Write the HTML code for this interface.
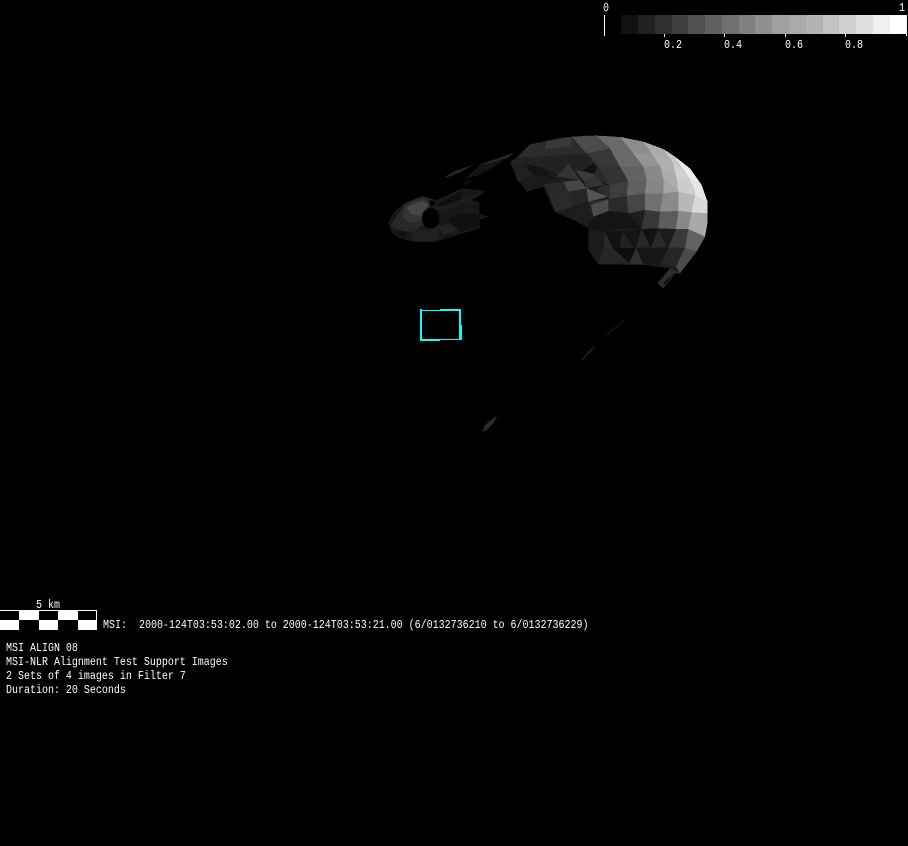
<!DOCTYPE html>
<html>
<head>
<meta charset="utf-8">
<style>
html,body{margin:0;padding:0;background:#000;width:908px;height:846px;overflow:hidden}
svg{display:block;position:absolute;left:0;top:0}
text{font-family:"Liberation Mono",monospace;font-size:10px;fill:#fff;white-space:pre}
</style>
</head>
<body>
<svg width="908" height="846" viewBox="0 0 908 846" xmlns="http://www.w3.org/2000/svg">
<rect width="908" height="846" fill="#000"/>
<g transform="translate(380,125) scale(0.33333)" shape-rendering="crispEdges">
<!-- base silhouette -->
<polygon fill="#1c1c1c" points="450,58 540,38 640,30 720,36 800,52 870,85 930,130 965,180 983,230 983,290 975,340 950,380 900,445 870,430 790,420 655,418 625,375 625,310 580,285 525,262 490,185 440,200 415,165 390,110 410,98"/>
<!-- left upper -->
<polygon fill="#2c2c2c" points="450,58 575,35 620,85 590,88 470,95 410,98"/>
<polygon fill="#3a3a3a" points="500,48 575,36 570,62 495,72"/>
<polygon fill="#222" points="410,98 470,95 620,85 655,125 640,150 585,135 540,150 490,128 390,110"/>
<polygon fill="#202020" points="390,110 435,118 460,150 415,172"/>
<polygon fill="#131313" points="435,118 490,128 510,150 460,150"/>
<polygon fill="#1a1a1a" points="460,150 540,150 490,178 438,196 470,165"/>
<polygon fill="#282828" points="490,178 550,170 565,200 505,205"/>
<polygon fill="#111" points="610,135 640,115 660,140 635,145"/>
<!-- band mesh row 0 -->
<polygon fill="#4c4c4c" points="575,35 650,32 690,70 620,85"/>
<polygon fill="#6a6a6a" points="650,32 720,36 760,85 690,70"/>
<polygon fill="#8c8c8c" points="720,36 790,50 815,85 760,85"/>
<polygon fill="#ababab" points="790,50 850,72 880,115 815,85"/>
<polygon fill="#c8c8c8" points="850,72 885,95 925,155 880,115"/>
<polygon fill="#ececec" points="885,95 930,130 965,180 925,155"/>
<!-- row 1 -->
<polygon fill="#383838" points="620,85 690,70 720,125 655,125"/>
<polygon fill="#6a6a6a" points="690,70 760,85 790,125 720,125"/>
<polygon fill="#949494" points="760,85 815,85 840,122 790,125"/>
<polygon fill="#b0b0b0" points="815,85 880,115 890,160 840,122"/>
<polygon fill="#d2d2d2" points="880,115 925,155 890,160"/>
<!-- row 2 -->
<polygon fill="#333" points="655,125 720,125 745,168 690,180"/>
<polygon fill="#626262" points="720,125 790,125 800,165 745,168"/>
<polygon fill="#888" points="790,125 840,122 850,162 800,165"/>
<polygon fill="#acacac" points="840,122 890,160 895,200 850,162"/>
<polygon fill="#cccccc" points="890,160 925,155 945,195 895,200"/>
<polygon fill="#e6e6e6" points="925,155 965,180 983,232 945,210 945,195"/>
<!-- row 3 -->
<polygon fill="#3e3e3e" points="690,180 745,168 740,212 690,222"/>
<polygon fill="#606060" points="745,168 800,165 795,205 740,212"/>
<polygon fill="#868686" points="800,165 850,162 850,205 795,205"/>
<polygon fill="#a4a4a4" points="850,162 895,200 850,205"/>
<polygon fill="#d0d0d0" points="895,200 945,195 945,210"/>
<!-- row 4 -->
<polygon fill="#2a2a2a" points="690,222 740,212 745,265 685,258"/>
<polygon fill="#464646" points="740,212 795,205 795,255 745,265"/>
<polygon fill="#707070" points="795,205 850,205 840,260 795,255"/>
<polygon fill="#8a8a8a" points="850,205 895,200 895,258 840,260"/>
<polygon fill="#b8b8b8" points="895,200 945,210 935,262 895,258"/>
<polygon fill="#d8d8d8" points="945,210 983,232 983,265 935,262"/>
<!-- mid triangles -->
<polygon fill="#333" points="565,115 600,165 530,155"/>
<polygon fill="#3c3c3c" points="585,135 655,150 610,165"/>
<polygon fill="#2a2a2a" points="640,150 655,125 690,180 650,165"/>
<polygon fill="#343434" points="610,165 650,150 670,180 620,190"/>
<polygon fill="#464646" points="550,170 600,165 620,190 565,200"/>
<polygon fill="#545454" points="620,190 685,215 625,230"/>
<polygon fill="#2e2e2e" points="670,180 690,180 690,222 650,195"/>
<polygon fill="#2a2a2a" points="505,205 565,200 580,245 525,262"/>
<polygon fill="#252525" points="565,200 620,190 625,230 580,245"/>
<polygon fill="#4c4c4c" points="632,240 685,222 685,258 640,275"/>
<polygon fill="#1e1e1e" points="580,245 632,240 640,275 580,285"/>
<polygon fill="#2c2c2c" points="625,230 690,222 632,240"/>
<!-- row 5 -->
<polygon fill="#141414" points="640,275 685,258 720,310 675,320 625,312 625,300"/>
<polygon fill="#141414" points="685,258 745,265 785,310 720,310"/>
<polygon fill="#1e1e1e" points="745,265 795,255 785,310"/>
<polygon fill="#383838" points="795,255 840,260 835,310 785,312"/>
<polygon fill="#5c5c5c" points="840,260 895,258 888,312 835,310"/>
<polygon fill="#888" points="895,258 935,262 925,312 888,312"/>
<polygon fill="#a8a8a8" points="935,262 983,265 983,290 975,335 925,312"/>
<!-- row 6 -->
<polygon fill="#1b1b1b" points="625,312 675,320 672,368 625,375"/>
<polygon fill="#2a2a2a" points="675,320 700,372 672,368"/>
<polygon fill="#121212" points="675,320 728,318 722,365 700,372"/>
<polygon fill="#222" points="728,318 760,368 720,365"/>
<polygon fill="#151515" points="728,318 785,312 768,368 760,368"/>
<polygon fill="#282828" points="785,312 812,368 768,368"/>
<polygon fill="#121212" points="785,312 835,310 812,368"/>
<polygon fill="#2a2a2a" points="835,315 860,368 812,368"/>
<polygon fill="#1c1c1c" points="835,310 888,312 865,368"/>
<polygon fill="#3a3a3a" points="888,312 925,312 915,368 865,368"/>
<polygon fill="#626262" points="925,312 975,335 950,380 915,368"/>
<!-- row 7 -->
<polygon fill="#262626" points="672,368 700,372 750,415 655,418"/>
<polygon fill="#0e0e0e" points="700,370 768,368 748,415"/>
<polygon fill="#303030" points="768,368 790,418 748,416"/>
<polygon fill="#161616" points="768,368 865,368 840,418 790,418"/>
<polygon fill="#262626" points="865,368 915,368 890,425 840,418"/>
<polygon fill="#4a4a4a" points="915,368 950,380 900,445 888,425"/>
<!-- tip -->
<polygon fill="#2e2e2e" points="870,430 900,445 885,445 850,490 832,475"/>
<polygon fill="#0a0a0a" points="885,440 856,478 850,476"/>

<!-- strips -->
<polygon fill="#222" points="195,155 230,135 280,120 240,143 200,158"/>
<polygon fill="#262626" points="300,118 405,82 380,100 315,120"/>
<polygon fill="#141414" points="255,160 300,120 375,105 300,150"/>
<polygon fill="#0e0e0e" points="245,170 280,165 260,180"/>

<!-- left blob -->
<polygon fill="#181818" points="25,295 40,262 75,235 125,213 150,220 170,225 245,190 320,198 275,225 298,232 298,265 328,275 298,285 298,310 160,352 95,350 60,340 35,322"/>
<polygon fill="#282828" points="32,300 75,235 125,213 155,222 130,300 100,320 60,320"/>
<polygon fill="#363636" points="72,250 100,230 135,220 150,240 120,290 90,295 70,280"/>
<polygon fill="#484848" points="80,245 130,228 145,240 120,272 95,268"/>
<polygon fill="#111" points="50,315 80,320 75,340 50,330"/>
<polygon fill="#202020" points="95,320 175,305 175,345 100,350"/>
<polygon fill="#0e0e0e" points="170,240 245,200 240,230 180,250"/>
<polygon fill="#1c1c1c" points="165,250 320,198 275,225 190,260"/>
<polygon fill="#101010" points="205,285 240,265 300,265 298,305 240,320"/>
<polygon fill="#242424" points="175,305 205,295 235,315 190,330"/>
<polygon fill="#000" points="148,225 168,232 155,245 150,240"/>
<ellipse cx="152" cy="280" rx="26" ry="31" fill="#000"/>
</g>

<!-- slivers -->
<g transform="translate(470,260) scale(0.33333)" shape-rendering="crispEdges">
<polygon fill="#121212" points="470,172 465,180 410,228 405,226"/>
<polygon fill="#1a1a1a" points="378,255 372,265 338,302 333,300 355,272"/>
<polygon fill="#2c2c2c" points="83,465 70,490 50,510 38,515 45,495"/>
</g>

<!-- cyan box -->
<g shape-rendering="crispEdges" fill="#00ffff">
<rect x="420" y="309" width="2" height="32"/>
<rect x="420" y="310" width="20" height="1"/>
<rect x="440" y="309" width="21" height="2"/>
<rect x="459" y="309" width="2" height="31"/>
<rect x="461" y="325" width="1" height="15"/>
<rect x="420" y="339" width="20" height="2"/>
<rect x="440" y="339" width="21" height="1"/>
</g>

<!-- colour bar -->
<g shape-rendering="crispEdges">
<rect x="621" y="15" width="17" height="19" fill="#111"/>
<rect x="638" y="15" width="17" height="19" fill="#202020"/>
<rect x="655" y="15" width="17" height="19" fill="#303030"/>
<rect x="672" y="15" width="16" height="19" fill="#404040"/>
<rect x="688" y="15" width="17" height="19" fill="#505050"/>
<rect x="705" y="15" width="17" height="19" fill="#606060"/>
<rect x="722" y="15" width="17" height="19" fill="#707070"/>
<rect x="739" y="15" width="16" height="19" fill="#808080"/>
<rect x="755" y="15" width="17" height="19" fill="#909090"/>
<rect x="772" y="15" width="17" height="19" fill="#a0a0a0"/>
<rect x="789" y="15" width="17" height="19" fill="#aaaaaa"/>
<rect x="806" y="15" width="17" height="19" fill="#b3b3b3"/>
<rect x="823" y="15" width="16" height="19" fill="#c3c3c3"/>
<rect x="839" y="15" width="17" height="19" fill="#d0d0d0"/>
<rect x="856" y="15" width="17" height="19" fill="#e0e0e0"/>
<rect x="873" y="15" width="17" height="19" fill="#f0f0f0"/>
<rect x="890" y="15" width="17" height="19" fill="#ffffff"/>
<rect x="604" y="15" width="1" height="21" fill="#fff"/>
<rect x="906" y="15" width="1" height="21" fill="#fff"/>
<rect x="664" y="34" width="1" height="3" fill="#fff"/>
<rect x="724" y="34" width="1" height="3" fill="#fff"/>
<rect x="785" y="34" width="1" height="3" fill="#fff"/>
<rect x="845" y="34" width="1" height="3" fill="#fff"/>
</g>
<text transform="translate(603,11) scale(1,1.2)">0</text>
<text transform="translate(899,11) scale(1,1.2)">1</text>
<text transform="translate(664,48) scale(1,1.2)">0.2</text>
<text transform="translate(724,48) scale(1,1.2)">0.4</text>
<text transform="translate(785,48) scale(1,1.2)">0.6</text>
<text transform="translate(845,48) scale(1,1.2)">0.8</text>

<!-- scale bar -->
<g shape-rendering="crispEdges">
<rect x="0" y="610" width="97" height="20" fill="#fff"/>
<rect x="0" y="611" width="19" height="9" fill="#000"/>
<rect x="39" y="611" width="19" height="9" fill="#000"/>
<rect x="78" y="611" width="18" height="9" fill="#000"/>
<rect x="19" y="620" width="20" height="10" fill="#000"/>
<rect x="58" y="620" width="20" height="10" fill="#000"/>
</g>
<text transform="translate(36,608) scale(1,1.2)">5 km</text>
<text transform="translate(103,628) scale(1,1.2)" xml:space="preserve">MSI:  2000-124T03:53:02.00 to 2000-124T03:53:21.00 (6/0132736210 to 6/0132736229)</text>
<text transform="translate(6,651) scale(1,1.2)">MSI ALIGN 08</text>
<text transform="translate(6,665) scale(1,1.2)">MSI-NLR Alignment Test Support Images</text>
<text transform="translate(6,679) scale(1,1.2)">2 Sets of 4 images in Filter 7</text>
<text transform="translate(6,693) scale(1,1.2)">Duration: 20 Seconds</text>
</svg>
</body>
</html>
